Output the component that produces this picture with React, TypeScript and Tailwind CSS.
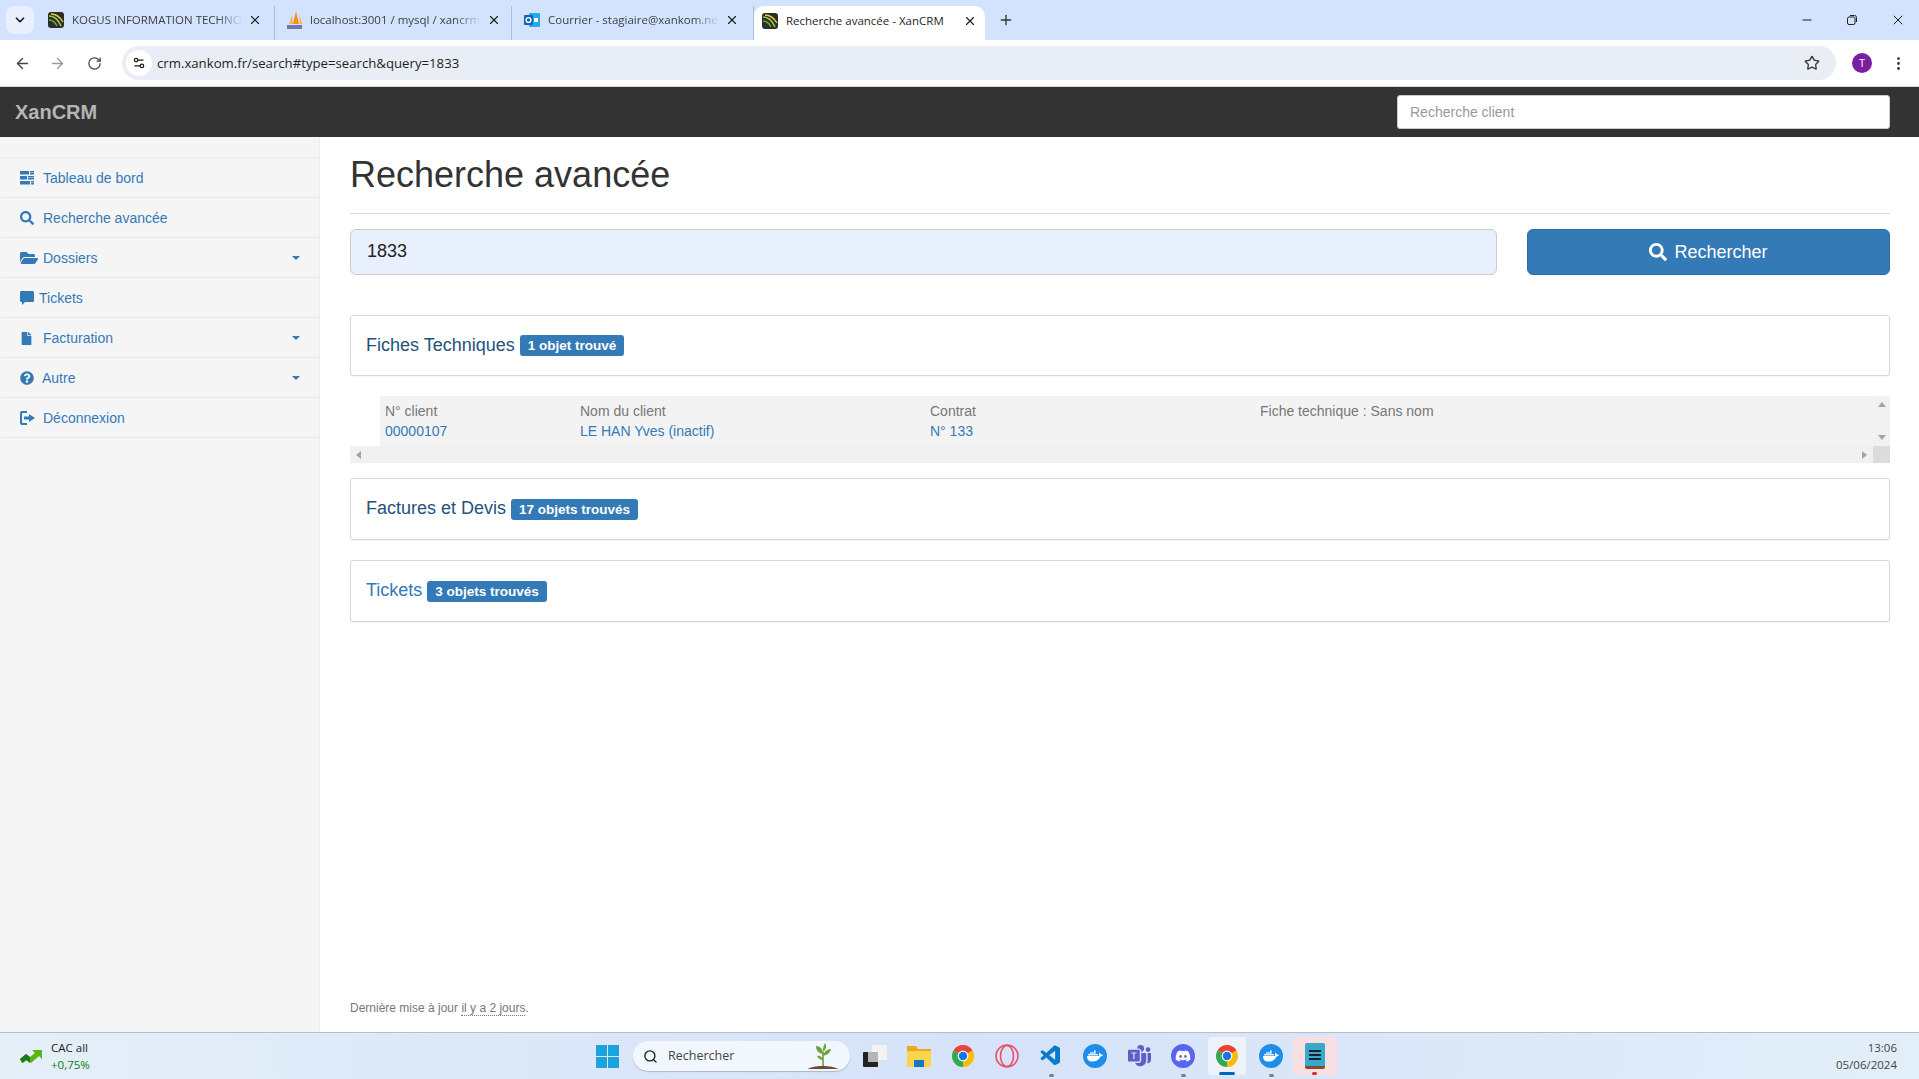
import React from 'react'
import { ArrowLeft, ArrowRight, EllipsisVertical, Minus, Plus, RotateCw, Search, Settings2, Star, X, ChevronDown } from 'lucide-react'
import { FaDiscord, FaDocker, FaFile, FaFolderOpen, FaQuestionCircle, FaSearch } from 'react-icons/fa'
import { BsMicrosoftTeams } from 'react-icons/bs'
import { VscVscode } from 'react-icons/vsc'

const XanIcon = () => (
  <svg width="16" height="16" viewBox="0 0 16 16">
    <rect width="16" height="16" rx="3" fill="#2b2d2a" />
    <path d="M1 4c5 0 9 3 12 10" stroke="#a8c93a" strokeWidth="1.6" fill="none" />
    <path d="M3 2c5 0 9 3 12 8" stroke="#e2d23c" strokeWidth="1.4" fill="none" />
    <path d="M1 8c4 0 6 2 8 6" stroke="#5fae4a" strokeWidth="1.4" fill="none" />
  </svg>
)

const PmaIcon = () => (
  <svg width="18" height="18" viewBox="0 0 18 18">
    <path d="M10 0l3 13H7z" fill="#f29111" />
    <path d="M6 4l1 9H3z" fill="#f6b26b" />
    <path d="M13.500 4l3 9h-3z" fill="#f6b26b" />
    <rect x="1" y="14" width="15" height="4" fill="#6c78af" />
  </svg>
)

const OutlookIcon = () => (
  <svg width="16" height="16" viewBox="0 0 16 16">
    <rect x="5" y="1" width="11" height="14" rx="1" fill="#28a8ea" />
    <rect x="0" y="3" width="9" height="10" rx="1" fill="#0f62b5" />
    <circle cx="4.5" cy="8" r="2.4" fill="none" stroke="#fff" strokeWidth="1.4" />
    <path d="M10 6h4v4h-4z" fill="#fff" />
  </svg>
)

const ChromeIcon = () => (
  <svg width="24" height="24" viewBox="0 0 24 24">
    <path d="M12 12L2.47 6.5A11 11 0 0 1 21.53 6.5Z" fill="#ea4335" />
    <path d="M12 12L21.53 6.5A11 11 0 0 1 12 23Z" fill="#fbbc04" />
    <path d="M12 12L12 23A11 11 0 0 1 2.47 6.5Z" fill="#34a853" />
    <circle cx="12" cy="12" r="5.4" fill="#fff" />
    <circle cx="12" cy="12" r="4.2" fill="#1a73e8" />
  </svg>
)

const TasksIcon = () => (
  <svg width="14" height="14" viewBox="0 0 14 14" fill="#337ab7">
    <path d="M0 0h9v3.500H0zM10 0h4v1.500h-4zM10 2h4v1.500h-4zM0 5h7v3.500H0zM8 5h6v1.500H8zM8 7h6v1.500H8zM0 10h10v3.500H0zM11 10h3v1.500h-3zM11 12h3v1.500h-3z" />
  </svg>
)

const CommentIcon = () => (
  <svg width="14" height="14" viewBox="0 0 14 14" fill="#337ab7">
    <path d="M1.500 0h11A1.500 1.500 0 0 1 14 1.500v8a1.500 1.500 0 0 1-1.500 1.500H5l-3 3v-3h-.5A1.500 1.500 0 0 1 0 9.500v-8A1.500 1.500 0 0 1 1.500 0z" />
  </svg>
)

const LogOutIcon = () => (
  <svg width="15" height="14" viewBox="0 0 15 14" fill="#337ab7">
    <path d="M2 0h5v2H3a1 1 0 0 0-1 1v8a1 1 0 0 0 1 1h4v2H2a2 2 0 0 1-2-2V2a2 2 0 0 1 2-2z" />
    <path d="M4 5.500h5V3l6 4-6 4V8.500H4z" />
  </svg>
)

const tabs = [
  { title: 'KOGUS INFORMATION TECHNOLOGIES', icon: <XanIcon />, width: 'w-[235px]', pad: 'pl-[8px] pr-[12px]' },
  { title: 'localhost:3001 / mysql / xancrm', icon: <PmaIcon />, width: 'w-[237px]', pad: 'pl-[11px] pr-[10px]' },
  { title: 'Courrier - stagiaire@xankom.net', icon: <OutlookIcon />, width: 'w-[242px]', pad: 'pl-[12px] pr-[14px]' },
]

const menu = [
  { label: 'Tableau de bord', icon: <TasksIcon />, gap: 'w-[23px]' },
  { label: 'Recherche avancée', icon: <FaSearch size={14} />, gap: 'w-[23px]' },
  { label: 'Dossiers', icon: <FaFolderOpen size={18} />, gap: 'w-[23px]', caret: true },
  { label: 'Tickets', icon: <CommentIcon />, gap: 'w-[19px]' },
  { label: 'Facturation', icon: <FaFile size={13} />, gap: 'w-[23px]', caret: true },
  { label: 'Autre', icon: <FaQuestionCircle size={14} />, gap: 'w-[22px]', caret: true },
  { label: 'Déconnexion', icon: <LogOutIcon />, gap: 'w-[23px]' },
]

const Panel = ({ title, badge, link, h }: { title: string; badge: string; link?: boolean; h: string }) => (
  <div className={`${h} flex items-center gap-[5px] rounded-[3px] border border-[#d6d6d6] bg-white pl-[15px] shadow-[0_1px_1px_rgba(0,0,0,0.05)]`}>
    <h3 className={`mt-[-2px] text-[18px] leading-5 ${link ? 'text-[#337ab7]' : 'text-[#23527c]'}`}>{title}</h3>
    <span className="rounded-[3px] bg-[#337ab7] px-2 py-[2px] text-[13.5px] font-bold leading-[17px] text-white">{badge}</span>
  </div>
)

const TaskIcon = ({ children, dot }: { children: React.ReactNode; dot?: boolean }) => (
  <div className="relative flex h-[38px] w-[44px] items-center justify-center">
    {children}
    {dot && <span className="absolute bottom-[-2px] left-[20px] h-[3px] w-[5px] rounded-full bg-[#7a7f87]" />}
  </div>
)

export default function App() {
  return (
    <div className="flex h-screen w-full flex-col overflow-hidden bg-white font-['Liberation_Sans',sans-serif] text-[14px] text-[#333333]">
      {/* onglets */}
      <div className="flex h-[40px] shrink-0 items-end bg-[#d3e3fd] font-['Open_Sans',sans-serif] text-[11.5px] text-[#3c4043]">
        <div className="mb-[6px] ml-[6px] mr-[6px] flex h-[28px] w-[28px] items-center justify-center rounded-lg bg-[#e8f0fe]">
          <ChevronDown size={14} strokeWidth={3} className="text-[#1f1f1f]" />
        </div>
        {tabs.map((t) => (
          <div key={t.title} className={`${t.width} ${t.pad} flex h-[34px] items-center border-r border-[#a8c0e4] pb-[6px]`}>
            <div className="flex h-[18px] w-[24px] shrink-0 items-center">{t.icon}</div>
            <span className="min-w-0 flex-1 overflow-hidden whitespace-nowrap [mask-image:linear-gradient(to_right,black_85%,transparent)]">{t.title}</span>
            <X size={14} strokeWidth={2} className="ml-[6px] shrink-0 text-[#1f1f1f]" />
          </div>
        ))}
        <div className="flex h-[34px] w-[231px] items-center rounded-t-[10px] bg-white pb-[4px] pl-[8px] pr-[8px] text-[#1f1f1f]">
          <div className="flex h-[18px] w-[24px] shrink-0 items-center"><XanIcon /></div>
          <span className="flex-1 whitespace-nowrap">Recherche avancée - XanCRM</span>
          <X size={14} strokeWidth={2} className="shrink-0" />
        </div>
        <div className="mb-[6px] ml-[12px] flex h-[28px] w-[18px] items-center justify-center">
          <Plus size={16} className="text-[#333]" />
        </div>
        <div className="mb-[12px] ml-auto flex items-center gap-[32px] pr-[13px] text-[#1f1f1f]">
          <Minus size={14} />
          <svg width="12" height="12" viewBox="0 0 12 12" fill="none" stroke="#1f1f1f" strokeWidth="1">
            <rect x="1.5" y="3" width="7.5" height="7.5" rx="1.5" />
            <path d="M4 1.5h4.5a2 2 0 0 1 2 2V8" />
          </svg>
          <X size={16} strokeWidth={1.5} />
        </div>
      </div>

      {/* barre d'adresse */}
      <div className="flex h-[47px] shrink-0 items-center rounded-t-[8px] border-b border-[#d5d9df] bg-white">
        <div className="flex items-center gap-[18px] pl-[14px] text-[#474747]">
          <ArrowLeft size={17} strokeWidth={2} />
          <ArrowRight size={17} strokeWidth={2} className="text-[#9c9c9c]" />
          <RotateCw size={15} strokeWidth={2} className="ml-[3px]" />
        </div>
        <div className="ml-[20px] flex h-[34px] w-[1714px] items-center rounded-full bg-[#e9eef6] pl-[4px] pr-[16px] font-['Open_Sans',sans-serif] text-[13.2px] text-[#1f1f1f]">
          <div className="flex h-[26px] w-[26px] items-center justify-center rounded-full bg-white">
            <Settings2 size={14} strokeWidth={2.2} />
          </div>
          <span className="ml-[5px] pt-[1px]">crm.xankom.fr/search#type=search&amp;query=1833</span>
          <Star size={16} strokeWidth={2} className="ml-auto text-[#333]" />
        </div>
        <div className="ml-[16px] flex h-[20px] w-[20px] items-center justify-center rounded-full bg-[#7b1fa2] text-[10px] text-white">T</div>
        <EllipsisVertical size={17} className="ml-[18px] text-[#333]" />
      </div>

      {/* navbar */}
      <header className="flex h-[50px] shrink-0 items-center justify-between bg-[#333333] pl-[15px] pr-[29px]">
        <span className="text-[20px] font-bold text-[#b5b5b5]">XanCRM</span>
        <input
          readOnly
          placeholder="Recherche client"
          className="h-[34px] w-[493px] rounded-[3px] border border-[#cccccc] bg-white px-3 text-[14px] placeholder:text-[#999999]"
        />
      </header>

      <div className="flex min-h-0 flex-1">
        {/* menu */}
        <aside className="w-[320px] shrink-0 border-r border-[#eeeeee] bg-[#f5f5f5] pt-[20px]">
          <div className="border-t border-[#ececec]">
            {menu.map((m) => (
              <div key={m.label} className="flex h-[40px] items-center rounded-b-[3px] border-b border-[#e7e7e7] pl-[20px] pr-[19px] pt-[1px] text-[#337ab7]">
                <span className={`${m.gap} flex shrink-0 items-center`}>{m.icon}</span>
                <span>{m.label}</span>
                {m.caret && <span className="ml-auto border-x-[4px] border-t-[4px] border-x-transparent border-t-[#337ab7]" />}
              </div>
            ))}
          </div>
        </aside>

        {/* contenu */}
        <main className="flex min-w-0 flex-1 flex-col pl-[30px] pr-[29px] pt-[18px]">
          <div className="h-[59px] border-b border-[#dddddd]">
            <h1 className="text-[36px] leading-[40px] text-[#333333]">Recherche avancée</h1>
          </div>

          <div className="mt-[15px] flex h-[46px] gap-[30px]">
            <div className="flex flex-1 items-center rounded-[6px] border border-[#cccccc] bg-[#e8f0fe] px-4 pb-[2px] text-[18px] text-[#222]">1833</div>
            <button className="flex w-[363px] items-center justify-center gap-[7px] rounded-[6px] border border-[#2e6da4] bg-[#337ab7] text-[18px] text-white">
              <FaSearch size={18} />
              Rechercher
            </button>
          </div>

          <div className="mt-[40px]">
            <Panel title="Fiches Techniques" badge="1 objet trouvé" h="h-[61px]" />
          </div>

          <div className="mt-[20px] h-[67px]">
            <div className="flex h-[50px]">
              <div className="w-[30px] shrink-0" />
              <div className="grid flex-1 grid-cols-[195px_350px_330px_1fr] content-start bg-[#f3f3f3] pl-[5px] pt-[5px] leading-[20px]">
                <span className="text-[#777777]">N° client</span>
                <span className="text-[#777777]">Nom du client</span>
                <span className="text-[#777777]">Contrat</span>
                <span className="text-[#777777]">Fiche technique : Sans nom</span>
                <span className="text-[#337ab7]">00000107</span>
                <span className="text-[#337ab7]">LE HAN Yves (inactif)</span>
                <span className="text-[#337ab7]">N° 133</span>
              </div>
              <div className="flex w-[17px] shrink-0 flex-col items-center justify-between bg-[#f1f1f1] py-[6px]">
                <span className="border-x-[4px] border-b-[5px] border-x-transparent border-b-[#a3a3a3]" />
                <span className="border-x-[4px] border-t-[5px] border-x-transparent border-t-[#a3a3a3]" />
              </div>
            </div>
            <div className="flex h-[17px]">
              <div className="flex flex-1 items-center justify-between bg-[#f1f1f1] px-[6px]">
                <span className="border-y-[4px] border-r-[5px] border-y-transparent border-r-[#a3a3a3]" />
                <span className="border-y-[4px] border-l-[5px] border-y-transparent border-l-[#a3a3a3]" />
              </div>
              <div className="w-[17px] shrink-0 bg-[#dcdcdc]" />
            </div>
          </div>

          <div className="mt-[15px]">
            <Panel title="Factures et Devis" badge="17 objets trouvés" h="h-[62px]" />
          </div>
          <div className="mt-[20px]">
            <Panel title="Tickets" badge="3 objets trouvés" link h="h-[62px]" />
          </div>

          <p className="mb-[16px] mt-auto text-[12px] leading-[16px] text-[#777777]">
            Dernière mise à jour <span className="border-b border-dotted border-[#777777]">il y a 2 jours</span>.
          </p>
        </main>
      </div>

      {/* barre des tâches */}
      <footer className="flex h-[47px] shrink-0 items-center border-t border-[#b4bfca] bg-gradient-to-r from-[#e4eff8] via-[#d6e2f8] to-[#e2eef8] font-['Open_Sans',sans-serif]">
        <div className="flex w-[585px] items-center gap-[8px] pl-[20px]">
          <svg width="23" height="16" viewBox="0 0 23 16">
            <path d="M0 11l6-5 4 3 5-4-3-3h10v9l-3-3-8 7-4-3-4 3z" fill="#5cb510" />
            <path d="M0 11l6-5 4 3v6l-4-3-4 3z" fill="#1e7a1e" />
          </svg>
          <div className="text-[11.5px] leading-[17px]">
            <div className="text-[#222]">CAC all</div>
            <div className="text-[#107c10]">+0,75%</div>
          </div>
        </div>
        <div className="flex h-[38px] w-[44px] items-center justify-center">
          <svg width="23" height="23" viewBox="0 0 23 23">
            <path d="M0 0h11v11H0zM12 0h11v11H12zM0 12h11v11H0zM12 12h11v11H12z" fill="#1aa3dc" />
          </svg>
        </div>
        <div className="ml-[4px] mr-[3px] flex h-[30px] w-[217px] items-center rounded-full bg-[#f2f6fd] pl-[10px] pr-[10px] text-[12.5px] text-[#444] shadow-[0_1px_1px_rgba(0,0,0,0.2)]">
          <Search size={15} strokeWidth={2.2} className="text-[#222]" />
          <span className="ml-[10px]">Rechercher</span>
          <svg width="34" height="28" viewBox="0 0 34 28" className="ml-auto">
            <path d="M17 24V10" stroke="#5c8a2e" strokeWidth="1.4" />
            <path d="M17 12C11 11 10 7 10 4c4 0 7 3 7 8zM17 10c0-5 1-7 2-9 2 3 1 7-2 9zM17 14c4-1 7-3 8-7-4 0-7 3-8 7zM17 18c-3 0-5-2-6-4 3-1 5 1 6 4z" fill="#6aa536" />
            <path d="M2 27c5-4 24-4 30 0z" fill="#6b4b34" />
          </svg>
        </div>
        <TaskIcon>
          <div className="relative h-[22px] w-[24px]">
            <div className="absolute bottom-0 left-0 h-[15px] w-[15px] rounded-[1px] bg-[#222]" />
            <div className="absolute right-0 top-0 h-[15px] w-[15px] rounded-[1px] bg-[#f3f3f3]" />
            <div className="absolute left-[5px] top-[7px] h-[10px] w-[10px] bg-[#b5b5b5]" />
          </div>
        </TaskIcon>
        <TaskIcon>
          <svg width="24" height="22" viewBox="0 0 24 22">
            <path d="M0 2a1 1 0 0 1 1-1h8l2 3h13v17a1 1 0 0 1-1 1H1a1 1 0 0 1-1-1z" fill="#e8a91e" />
            <path d="M0 6h24v15a1 1 0 0 1-1 1H1a1 1 0 0 1-1-1z" fill="#fcd34d" />
            <rect x="7" y="15" width="10" height="7" fill="#1479c9" />
          </svg>
        </TaskIcon>
        <TaskIcon><ChromeIcon /></TaskIcon>
        <TaskIcon>
          <svg width="24" height="24" viewBox="0 0 24 24" fill="none" stroke="#ea4f73" strokeWidth="1.6">
            <circle cx="12" cy="12" r="11" />
            <ellipse cx="12" cy="12" rx="6.5" ry="10.5" />
          </svg>
        </TaskIcon>
        <TaskIcon dot><VscVscode size={24} className="text-[#0a7acc]" /></TaskIcon>
        <TaskIcon>
          <div className="flex h-[24px] w-[24px] items-center justify-center rounded-full bg-[#1d8fe8]"><FaDocker size={16} className="text-white" /></div>
        </TaskIcon>
        <TaskIcon><BsMicrosoftTeams size={23} className="text-[#5b5fc7]" /></TaskIcon>
        <TaskIcon dot>
          <div className="flex h-[24px] w-[24px] items-center justify-center rounded-full bg-[#5865f2]"><FaDiscord size={16} className="text-white" /></div>
        </TaskIcon>
        <div className="relative mx-[3px] flex h-[38px] w-[38px] items-center justify-center rounded-[4px] bg-[#eef3fb]">
          <ChromeIcon />
          <span className="absolute bottom-0 left-[11px] h-[3px] w-[16px] rounded-full bg-[#0067c0]" />
        </div>
        <TaskIcon dot>
          <div className="flex h-[24px] w-[24px] items-center justify-center rounded-full bg-[#1d8fe8]"><FaDocker size={16} className="text-white" /></div>
        </TaskIcon>
        <div className="relative flex h-[38px] w-[44px] items-center justify-center rounded-[4px] bg-[#f8dfe2]">
          <div className="flex h-[26px] w-[20px] flex-col items-center justify-center gap-[2px] rounded-[2px] border-b-[3px] border-[#8a4a2c] bg-[#38a9c9]">
            <span className="h-[2px] w-[12px] bg-[#123]" />
            <span className="h-[2px] w-[12px] bg-[#123]" />
            <span className="h-[2px] w-[12px] bg-[#123]" />
          </div>
          <span className="absolute bottom-0 left-[19px] h-[3px] w-[5px] rounded-full bg-[#d32f2f]" />
        </div>
        <div className="ml-auto pr-[22px] text-right text-[11.5px] leading-[17px] text-[#444]">
          <div>13:06</div>
          <div>05/06/2024</div>
        </div>
      </footer>
    </div>
  )
}
